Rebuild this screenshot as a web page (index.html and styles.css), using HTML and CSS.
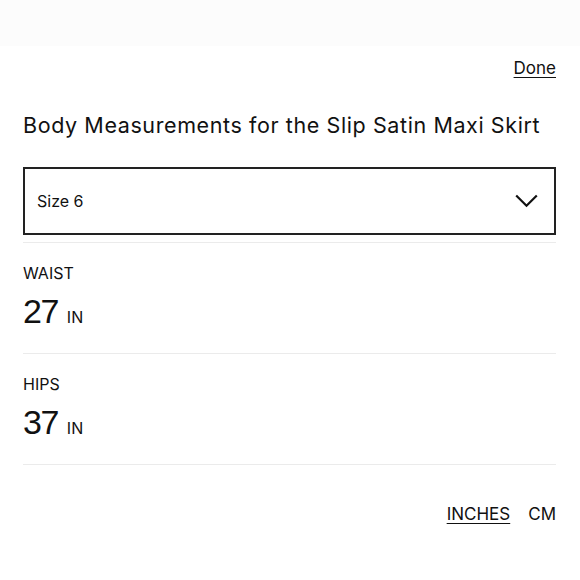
FILE: index.html
```html
<!DOCTYPE html>
<html lang="en">
<head>
    <meta charset="UTF-8">
    <meta name="viewport" content="width=device-width, initial-scale=1.0">
    <title>Body Measurements</title>
    <link rel="stylesheet" href="styles.css">
</head>
<body>
    <div class="backdrop"></div>

    <div class="sheet">
        <div class="done-row">
            <a href="#" class="link">Done</a>
        </div>

        <h1 class="title">Body Measurements for the Slip Satin Maxi Skirt</h1>

        <div class="select">
            <span>Size 6</span>
            <svg class="chevron" width="23" height="14" viewBox="0 0 23 14">
                <path d="M1.2 1.5 L11.5 11.8 L21.8 1.5" fill="none" stroke="#111" stroke-width="2.2"/>
            </svg>
        </div>

        <div class="measure">
            <div class="label">WAIST</div>
            <div class="value"><span class="num">27</span><span class="unit">IN</span></div>
        </div>
        <div class="measure">
            <div class="label">HIPS</div>
            <div class="value"><span class="num">37</span><span class="unit">IN</span></div>
        </div>

        <div class="units">
            <a href="#" class="link">INCHES</a>
            <a href="#" class="plain">CM</a>
        </div>
    </div>
</body>
</html>
```

FILE: styles.css
```css
body {
    margin: 0;
    padding: 0;
    font-family: Inter, "Open Sans", sans-serif;
    color: #111;
    background: #ffffff;
}
.backdrop {
    height: 46px;
    background: #fcfcfc;
}
.sheet {
    padding: 0 24px 0 23px;
}
.done-row {
    display: flex;
    justify-content: flex-end;
    padding-top: 11px;
}
.link {
    color: #111;
    font-size: 17px;
    line-height: 22px;
    text-decoration: underline;
    text-underline-offset: 3px;
}
.plain {
    color: #111;
    font-size: 17px;
    line-height: 22px;
    text-decoration: none;
}
.title {
    margin: 32px 0 0 0;
    font-size: 21.5px;
    font-weight: 400;
    line-height: 28px;
    letter-spacing: 0.6px;
    white-space: nowrap;
}
.select {
    margin-top: 28px;
    height: 64px;
    border: 2px solid #222;
    display: flex;
    align-items: center;
    justify-content: space-between;
    padding: 0 16px 0 12px;
    font-size: 16px;
}
.measure {
    border-top: 1px solid #ebebeb;
    padding: 20px 0 18px 0;
}
.select + .measure {
    margin-top: 7px;
}
.label {
    font-size: 16px;
    line-height: 20px;
}
.value {
    margin-top: 10px;
    display: flex;
    align-items: baseline;
    gap: 9px;
    line-height: 36px;
}
.num {
    font-family: "Liberation Sans", Arial, sans-serif;
    font-size: 34px;
    letter-spacing: -1.5px;
}
.unit {
    font-size: 16px;
}
.units {
    border-top: 1px solid #ebebeb;
    display: flex;
    justify-content: flex-end;
    gap: 18px;
    padding-top: 38px;
}
```
